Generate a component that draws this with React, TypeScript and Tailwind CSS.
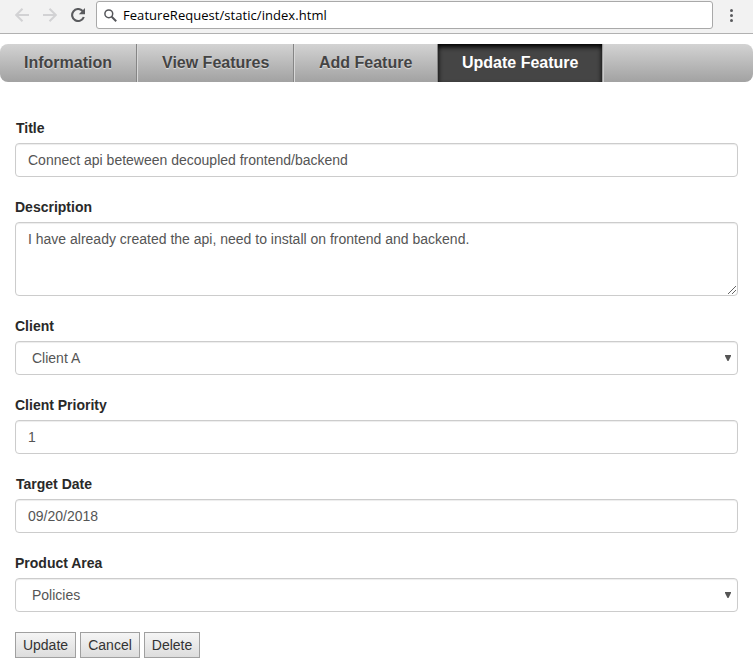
import React from 'react';

const fieldClass =
  'block w-full rounded-[4px] border border-[#ccc] bg-white px-3 text-[14px] leading-5 text-[#555] shadow-[inset_0_1px_1px_rgba(0,0,0,0.075)] outline-none';

function BrowserBar() {
  return (
    <header className="flex h-[34px] items-start border-b border-[#b1b1b1] bg-[#f2f2f2]">
      <div className="flex w-24 shrink-0 items-center gap-[14px] pl-[15px] pt-2">
        <svg width="14" height="14" viewBox="0 0 14 14" fill="none" stroke="#d2d2d4" strokeWidth="2">
          <path d="M14 7H1.5M7.500 0.700L1.200 7l6.300 6.300" />
        </svg>
        <svg width="14" height="14" viewBox="0 0 14 14" fill="none" stroke="#d2d2d4" strokeWidth="2">
          <path d="M0 7h12.500M6.500 0.700L12.800 7l-6.300 6.300" />
        </svg>
        <svg width="14" height="14" viewBox="0 0 14 14" fill="none">
          <path d="M11.600 3A6 6 0 1 0 12.800 9" stroke="#5a5b5e" strokeWidth="2.100" />
          <path d="M14 0v6.200H7.800z" fill="#5a5b5e" />
        </svg>
      </div>
      <div className="mt-px flex h-7 w-[617px] items-center rounded-[3px] border border-[#a9a9a9] bg-white pl-[7px]">
        <svg width="13" height="13" viewBox="0 0 13 13" fill="none" stroke="#55565a">
          <circle cx="4.800" cy="4.800" r="3.900" strokeWidth="1.500" />
          <path d="M7.700 7.700l4.500 4.500" strokeWidth="2" />
        </svg>
        <span className="ml-[6px] whitespace-nowrap font-['Open_Sans',sans-serif] text-[13px] leading-5 tracking-[0.05px] text-black">
          FeatureRequest/static/index.html
        </span>
      </div>
      <svg className="ml-[17px] mt-[9px]" width="4" height="14" viewBox="0 0 4 14" fill="#5a5b5e">
        <circle cx="1.500" cy="1.500" r="1.500" />
        <circle cx="1.500" cy="6.500" r="1.500" />
        <circle cx="1.500" cy="11.500" r="1.500" />
      </svg>
    </header>
  );
}

function Tabs() {
  const tab =
    'h-full border-r border-r-[#858585] pb-[2px] pl-6 text-[16px] font-bold leading-[35px] text-[#444] text-left whitespace-nowrap [text-shadow:0_1px_1px_rgba(255,255,255,0.6)]';
  return (
    <nav className="mt-[10px] flex h-[38px] overflow-hidden rounded-[8px] bg-linear-to-b from-[#d3d3d3] to-[#a2a2a2]">
      <button className={`${tab} w-[137px]`}>Information</button>
      <button className={`${tab} w-[157px] border-l border-l-[#d8d8d8]`}>View Features</button>
      <button className={`${tab} w-[144px] border-l border-l-[#d8d8d8]`}>Add Feature</button>
      <button className="h-full w-[164px] whitespace-nowrap bg-[#454545] pb-[2px] pl-6 text-left text-[16px] font-bold leading-[35px] text-white shadow-[inset_0_3px_5px_0_#000]">
        Update Feature
      </button>
      <span className="w-px bg-[#a0a0a0]" />
      <span className="w-px bg-[#cacaca]" />
    </nav>
  );
}

function Field({ label, indent, children }: { label: string; indent?: boolean; children: React.ReactNode }) {
  return (
    <div className="mb-5">
      <label className={`mb-[5px] block text-[14px] font-bold leading-5 text-[#292929] ${indent ? 'pl-px' : ''}`}>
        {label}
      </label>
      {children}
    </div>
  );
}

function Select({ value }: { value: string }) {
  return (
    <div className="relative">
      <select className={`${fieldClass} h-[34px] appearance-none pl-4`} defaultValue={value}>
        <option>{value}</option>
      </select>
      <svg className="pointer-events-none absolute right-[7px] top-[14px]" width="6" height="6" viewBox="0 0 6 6" fill="#555">
        <path d="M0 0h6v1L3.500 6h-1L0 1z" />
      </svg>
    </div>
  );
}

export default function App() {
  const button =
    'h-[26px] border border-[#a0a0a0] bg-linear-to-b from-[#f5f5f5] to-[#dddddd] text-center text-[14px] leading-5 text-[#333]';
  return (
    <div className="h-[666px] w-[753px] overflow-hidden bg-white font-['Liberation_Sans',Arial,sans-serif]">
      <BrowserBar />
      <Tabs />
      <form className="px-[15px] pt-9" onSubmit={(e) => e.preventDefault()}>
        <Field label="Title" indent>
          <input className={`${fieldClass} h-[34px]`} defaultValue="Connect api beteween decoupled frontend/backend" />
        </Field>
        <Field label="Description">
          <div className="relative">
            <textarea
              className={`${fieldClass} h-[74px] resize-none py-[6px]`}
              defaultValue="I have already created the api, need to install on frontend and backend."
            />
            <svg className="pointer-events-none absolute bottom-[2px] right-[2px]" width="8" height="8" viewBox="0 0 8 8" stroke="#555" strokeWidth="0.900">
              <path d="M0 8L8 0M4 8l4-4" />
            </svg>
          </div>
        </Field>
        <Field label="Client">
          <Select value="Client A" />
        </Field>
        <Field label="Client Priority">
          <input className={`${fieldClass} h-[34px]`} defaultValue="1" />
        </Field>
        <Field label="Target Date" indent>
          <input className={`${fieldClass} h-[34px]`} defaultValue="09/20/2018" />
        </Field>
        <Field label="Product Area">
          <Select value="Policies" />
        </Field>
        <div className="flex gap-1">
          <button className={`${button} w-[61px]`}>Update</button>
          <button className={`${button} w-[60px]`}>Cancel</button>
          <button className={`${button} w-[56px]`}>Delete</button>
        </div>
      </form>
    </div>
  );
}
